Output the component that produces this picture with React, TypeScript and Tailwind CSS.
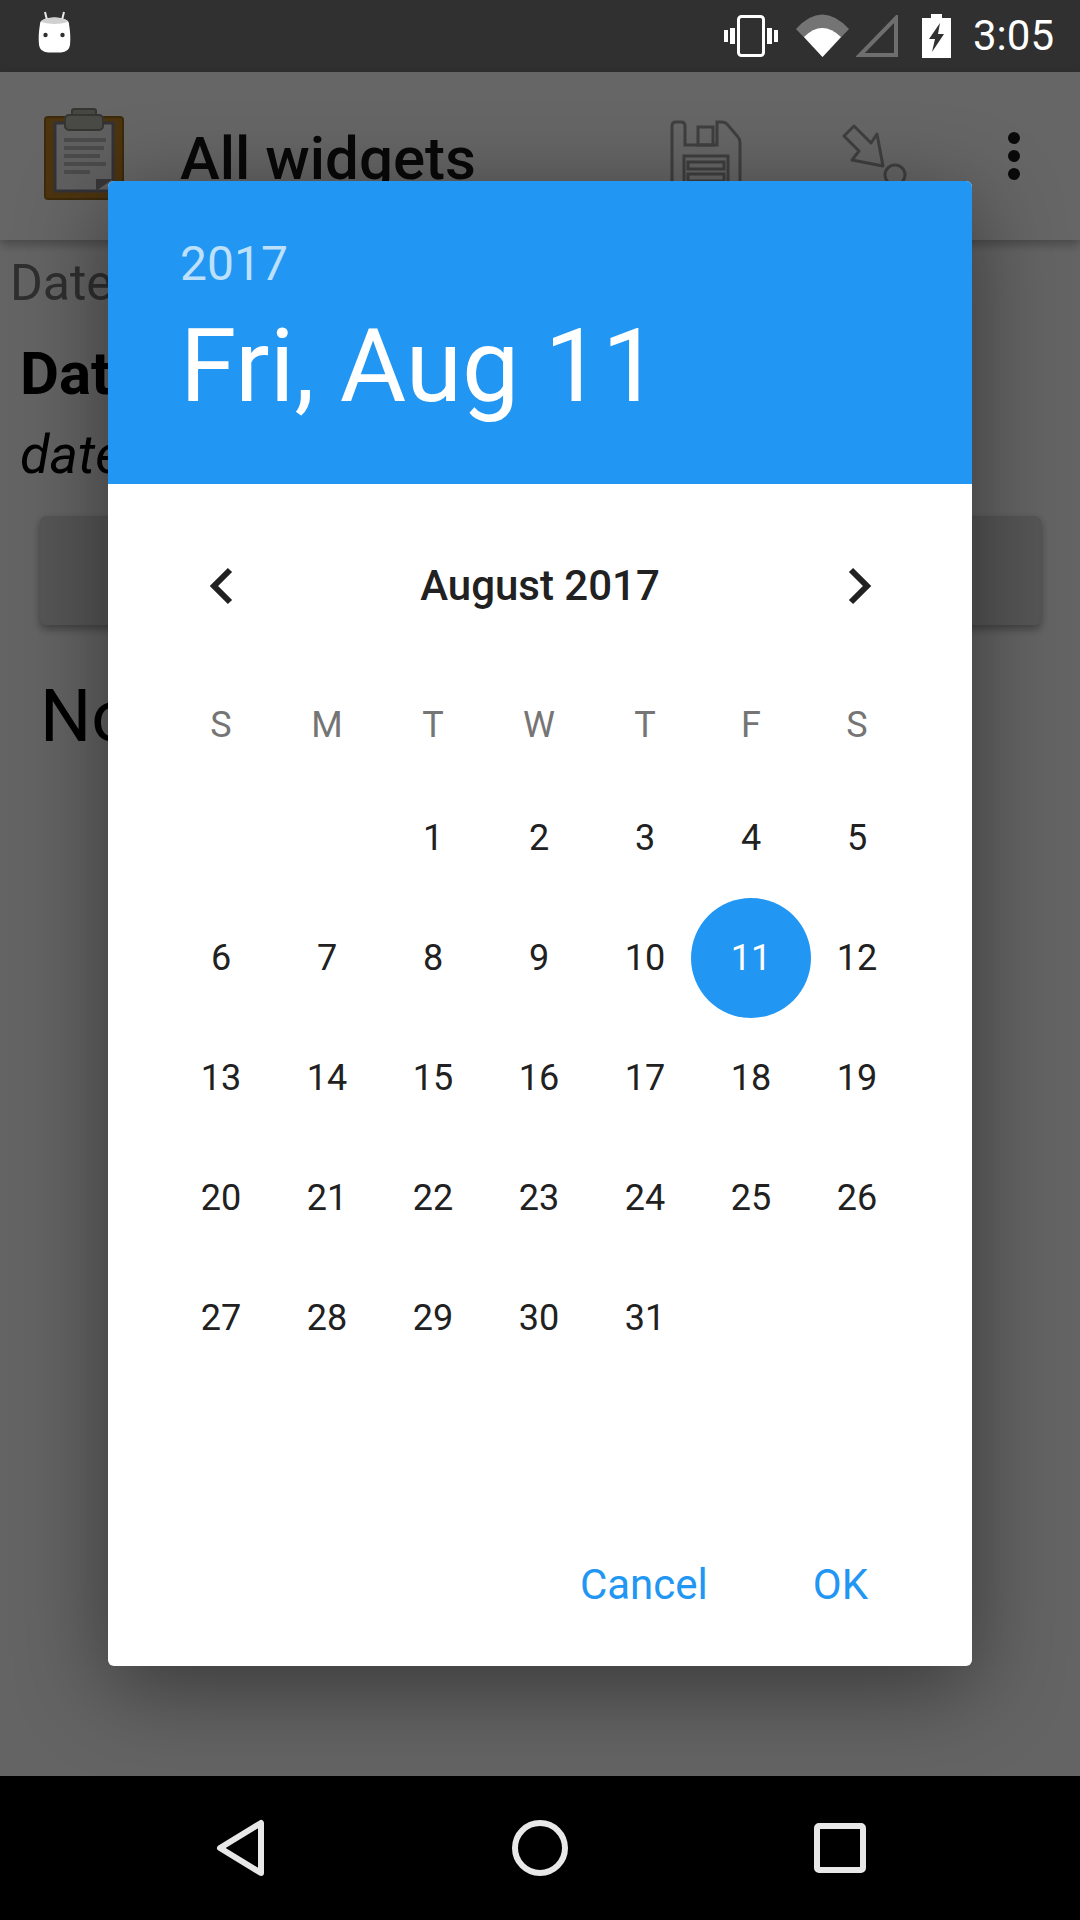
import { type FC } from 'react';

const WEEKDAYS = ['S', 'M', 'T', 'W', 'T', 'F', 'S'];

// August 2017 starts on a Tuesday
const DAYS: (number | null)[] = [
  null,
  null,
  ...Array.from({ length: 31 }, (_, i) => i + 1),
];

const StatusBar: FC = () => (
  <div className="h-[72px] shrink-0 bg-[#303030] flex items-center text-white">
    {/* marshmallow notification icon */}
    <svg className="ml-[37px] mt-[-8px]" width="35" height="42" viewBox="0 0 35 42">
      <path d="M8 1 L10 9 M27 1 L25 9" stroke="#e8e8e8" strokeWidth="2" />
      <path
        d="M3 13 Q3 7 17.5 6.5 Q32 7 32 13 Q34 25 33 34 Q32 41 24 41.500 L11 41.500 Q3 41 2 34 Q1 25 3 13 Z"
        fill="#fff"
      />
      <path d="M4 11 Q5 7 17.500 6.500 Q30 7 31 11 Q18 15 4 11 Z" fill="#d0d0d0" />
      <circle cx="8.500" cy="24" r="2.200" fill="#303030" />
      <circle cx="25.500" cy="24" r="2.200" fill="#303030" />
    </svg>
    <div className="ml-auto flex items-center">
      <svg width="55" height="42" viewBox="0 0 55 42">
        <rect x="14.500" y="1.500" width="25" height="39" rx="3" fill="none" stroke="#fff" strokeWidth="3" />
        <rect x="6" y="13" width="5" height="16" fill="#fff" />
        <rect x="0" y="15" width="4" height="12" fill="#fff" />
        <rect x="43" y="13" width="5" height="16" fill="#fff" />
        <rect x="50" y="15" width="4" height="12" fill="#fff" />
      </svg>
      <svg className="ml-[17px]" width="54" height="44" viewBox="0 0 54 44">
        <path d="M0 15 Q26 -14 53 15 L26.500 43 Z" fill="#747474" />
        <path d="M8 23 Q26 5 45 23 L26.500 43 Z" fill="#fff" />
      </svg>
      <svg className="ml-[6px]" width="42" height="42" viewBox="0 0 42 42">
        <path d="M40 3 L40 40 L4 40 Z" fill="none" stroke="#6e6e6e" strokeWidth="4" />
      </svg>
      <svg className="ml-[24px]" width="30" height="44" viewBox="0 0 30 44">
        <path d="M9 0 H20 V4 H29 V44 H0 V4 H9 Z" fill="#fff" />
        <path d="M18 9 L7 25 H13 L10 38 L22 20 H16 Z" fill="#303030" />
      </svg>
      <span className="ml-[21px] mr-[26px] text-[42px] leading-none">3:05</span>
    </div>
  </div>
);

// colours here are picked to land right once the 60% scrim is on top
const ClipboardIcon: FC = () => (
  <svg className="ml-[44px]" width="80" height="92" viewBox="0 0 80 92">
    <rect x="1" y="9" width="78" height="82" rx="3" fill="#bd8226" stroke="#966a18" strokeWidth="2" />
    <rect x="11" y="15" width="58" height="68" fill="#f0f0f0" stroke="#80808a" strokeWidth="3" />
    <g fill="#bcbcbc">
      <rect x="20" y="30" width="42" height="4" />
      <rect x="20" y="38" width="40" height="4" />
      <rect x="20" y="46" width="36" height="4" />
      <rect x="20" y="54" width="42" height="4" />
      <rect x="20" y="62" width="26" height="4" />
    </g>
    <path d="M52 83 V71 H69 Z" fill="#8c8c8c" />
    <rect x="28" y="1" width="24" height="10" rx="2" fill="#b0b0a6" stroke="#84847a" strokeWidth="2" />
    <rect x="21" y="7" width="38" height="15" rx="4" fill="#b8b8ae" stroke="#84847a" strokeWidth="2" />
  </svg>
);

const ToolbarIcons: FC = () => (
  <div className="ml-auto flex items-start pt-[12px] text-[#9e9e9e]">
    <svg width="72" height="84" viewBox="0 0 72 84" fill="none" stroke="currentColor" strokeWidth="3">
      <path d="M2 6 Q2 2 6 2 H11 Q15 2 15 6 V25 H47 V2 H52 Q55 2 57 4 L68 17 Q70 19 70 23 V82 H2 Z" />
      <rect x="28" y="7" width="15" height="18" />
      <rect x="14" y="36" width="44" height="46" />
      <rect x="18" y="42" width="36" height="7" />
      <rect x="18" y="54" width="36" height="7" />
    </svg>
    <svg className="ml-[100px] mt-[3px]" width="66" height="72" viewBox="0 0 66 72" fill="none" stroke="currentColor" strokeWidth="3">
      <path d="M2 13 L12 3 L29 20 L35 11 L41 43 L10 37 L17 28 Z" strokeLinejoin="round" />
      <circle cx="53" cy="52" r="10" />
    </svg>
    <svg className="ml-[100px] mr-[60px] mt-[12px]" width="12" height="48" viewBox="0 0 12 48" fill="#1a1a1a">
      <circle cx="6" cy="6" r="6" />
      <circle cx="6" cy="24" r="6" />
      <circle cx="6" cy="42" r="6" />
    </svg>
  </div>
);

const Page: FC = () => (
  <div className="flex-1 flex flex-col bg-[#fafafa]">
    <div className="h-[168px] shrink-0 bg-[#ffffff] flex items-start pt-[36px] shadow-[0_4px_10px_rgba(0,0,0,0.3)]">
      <ClipboardIcon />
      <span className="ml-[56px] mt-[16px] text-[60px] leading-[70px] font-medium text-[#141414]">All widgets</span>
      <ToolbarIcons />
    </div>
    <div className="flex flex-col text-black">
      <span className="ml-[10px] mt-[13px] text-[50px] leading-[60px] text-[#757575]">Date</span>
      <span className="ml-[20px] mt-[26px] text-[60px] leading-[70px] font-bold">Date</span>
      <span className="ml-[20px] mt-[14px] text-[54px] leading-[64px] italic">date</span>
      <div className="ml-[40px] mr-[39px] mt-[29px] h-[109px] rounded-[6px] bg-[#d6d6d6] shadow-[0_4px_8px_rgba(0,0,0,0.35)]" />
      <span className="ml-[40px] mt-[50px] text-[72px] leading-[84px]">None</span>
    </div>
  </div>
);

const DatePickerDialog: FC = () => (
  <div className="mt-[-1px] w-[864px] h-[1485px] bg-white rounded-[6px] overflow-hidden flex flex-col shadow-[0_20px_90px_rgba(0,0,0,0.45)]">
    <div className="h-[303px] shrink-0 bg-[#2196f3] pl-[72px] text-white flex flex-col">
      <span className="mt-[55px] text-[48px] leading-[56px] text-[#bde0fb]">2017</span>
      <span className="mt-[14px] text-[102px] leading-[120px]">Fri, Aug 11</span>
    </div>

    <div className="mt-[42px] h-[120px] shrink-0 flex items-center justify-between px-[60px] text-[#212121]">
      <svg className="ml-[31px]" width="48" height="48" viewBox="0 0 48 48" fill="none" stroke="currentColor" strokeWidth="6">
        <path d="M31 8 L15 24 L31 40" />
      </svg>
      <span className="mr-[1px] text-[42px] font-medium leading-none">August 2017</span>
      <svg className="mr-[30px]" width="48" height="48" viewBox="0 0 48 48" fill="none" stroke="currentColor" strokeWidth="6">
        <path d="M17 8 L33 24 L17 40" />
      </svg>
    </div>

    <div className="mt-[43px] ml-[60px] mr-[62px] h-[72px] shrink-0 grid grid-cols-7 items-center text-center text-[36px] text-[#757575]">
      {WEEKDAYS.map((d, i) => (
        <span key={i}>{d}</span>
      ))}
    </div>

    <div className="mt-[17px] ml-[60px] mr-[62px] grid grid-cols-7 auto-rows-[120px] text-[36px] text-[#212121]">
      {DAYS.map((d, i) => (
        <div key={i} className="flex items-center justify-center">
          {d === 11 ? (
            <span className="w-[120px] h-[120px] shrink-0 rounded-full bg-[#2196f3] text-white flex items-center justify-center">
              {d}
            </span>
          ) : (
            d
          )}
        </div>
      ))}
    </div>

    <div className="mt-auto h-[109px] flex items-start justify-end pr-[104px] text-[42px] leading-[56px] text-[#2196f3]">
      <span>Cancel</span>
      <span className="ml-[105px]">OK</span>
    </div>
  </div>
);

const NavBar: FC = () => (
  <div className="h-[144px] shrink-0 bg-black flex items-center text-[#e8e8e8]">
    <svg className="ml-[216px]" width="50" height="58" viewBox="0 0 50 58" fill="none" stroke="currentColor" strokeWidth="6" strokeLinejoin="round">
      <path d="M45 4 V54 L4 29 Z" />
    </svg>
    <svg className="ml-[245px]" width="58" height="58" viewBox="0 0 58 58" fill="none" stroke="currentColor" strokeWidth="6">
      <circle cx="29" cy="29" r="25" />
    </svg>
    <svg className="ml-[245px]" width="52" height="50" viewBox="0 0 52 50" fill="none" stroke="currentColor" strokeWidth="6" strokeLinejoin="round">
      <rect x="3" y="3" width="46" height="44" rx="2" />
    </svg>
  </div>
);

const App: FC = () => (
  <div className="relative w-[1080px] h-[1920px] overflow-hidden flex flex-col font-['Roboto',sans-serif]">
    <StatusBar />
    <Page />
    <NavBar />
    {/* modal scrim sits between status bar and nav bar */}
    <div className="absolute inset-x-0 top-[72px] bottom-[144px] bg-black/60 flex items-center justify-center">
      <DatePickerDialog />
    </div>
  </div>
);

export default App;
